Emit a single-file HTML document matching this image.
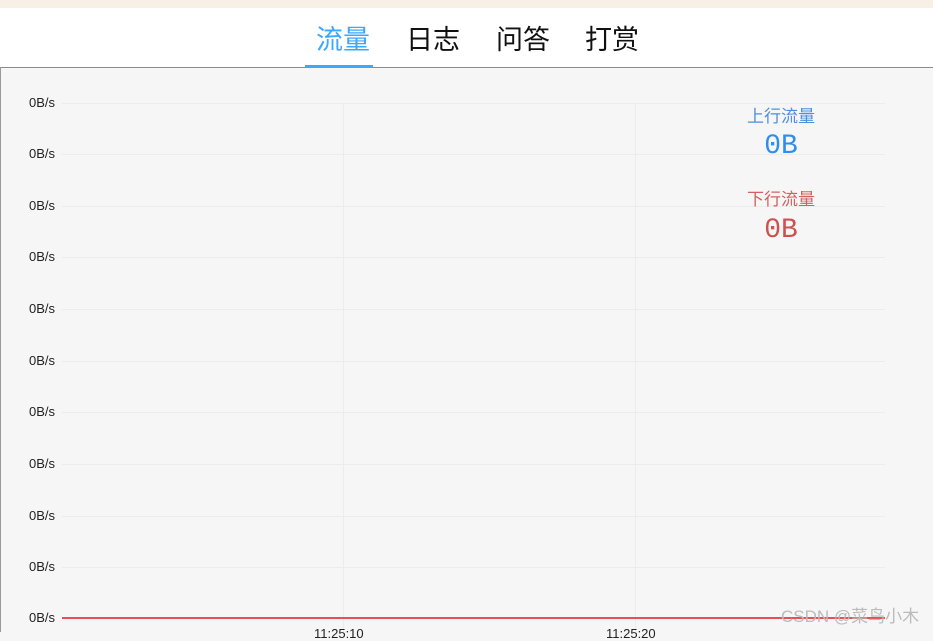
<!DOCTYPE html>
<html><head><meta charset="utf-8"><style>
body{margin:0;width:933px;height:632px;overflow:hidden;background:#f6f6f6;font-family:"Liberation Sans","Noto Sans CJK SC",sans-serif;position:relative}
.top{position:absolute;left:0;top:0;width:933px;height:8px;background:#f8efe7}
.hdr{position:absolute;left:0;top:8px;width:933px;height:59px;background:#fff;border-bottom:1px solid #8a8a8a}
.tab{position:absolute;top:14px;font-size:27px;color:#111;transform:translateX(-50%);line-height:36px}
.ul{position:absolute;left:305px;top:57px;width:68px;height:3px;background:#3aa8ff}
.lb{position:absolute;left:0;width:55px;text-align:right;font-size:13px;color:#222}
.g{position:absolute;left:62px;width:823px;height:1px;background:#ececec}
.v{position:absolute;top:103px;width:1px;height:529px;background:#ececec}
</style></head><body>
<div class="top"></div>
<div class="hdr">
<div class="tab" style="left:343px;color:#3aa8ff">流量</div>
<div class="tab" style="left:433px">日志</div>
<div class="tab" style="left:523px">问答</div>
<div class="tab" style="left:612px">打赏</div>
<div class="ul"></div>
</div>
<div style="position:absolute;left:0;top:67px;width:1px;height:565px;background:#999"></div>
<div class="v" style="left:343px"></div><div class="v" style="left:635px"></div>
<div class="g" style="top:103px"></div><div class="lb" style="top:95px">0B/s</div>
<div class="g" style="top:154px"></div><div class="lb" style="top:146px">0B/s</div>
<div class="g" style="top:206px"></div><div class="lb" style="top:198px">0B/s</div>
<div class="g" style="top:257px"></div><div class="lb" style="top:249px">0B/s</div>
<div class="g" style="top:309px"></div><div class="lb" style="top:301px">0B/s</div>
<div class="g" style="top:361px"></div><div class="lb" style="top:353px">0B/s</div>
<div class="g" style="top:412px"></div><div class="lb" style="top:404px">0B/s</div>
<div class="g" style="top:464px"></div><div class="lb" style="top:456px">0B/s</div>
<div class="g" style="top:516px"></div><div class="lb" style="top:508px">0B/s</div>
<div class="g" style="top:567px"></div><div class="lb" style="top:559px">0B/s</div>
<div class="lb" style="top:610px">0B/s</div>
<div style="position:absolute;left:62px;top:617px;width:823px;height:2px;background:#e85050"></div>
<div style="position:absolute;left:314px;top:626px;font-size:13px;color:#222">11:25:10</div>
<div style="position:absolute;left:606px;top:626px;font-size:13px;color:#222">11:25:20</div>
<div style="position:absolute;left:721px;top:102px;width:120px;text-align:center;font-size:17px;color:#4a90e2">上行流量</div>
<div style="position:absolute;left:721px;top:131px;width:120px;text-align:center;font-size:28px;color:#2b8ef0;font-family:'Liberation Mono',monospace">0B</div>
<div style="position:absolute;left:721px;top:185px;width:120px;text-align:center;font-size:17px;color:#d56060">下行流量</div>
<div style="position:absolute;left:721px;top:215px;width:120px;text-align:center;font-size:28px;color:#d05050;font-family:'Liberation Mono',monospace">0B</div>
<div style="position:absolute;left:781px;top:602px;font-size:17px;color:#bbb;white-space:nowrap">CSDN @菜鸟小木</div>
</body></html>
